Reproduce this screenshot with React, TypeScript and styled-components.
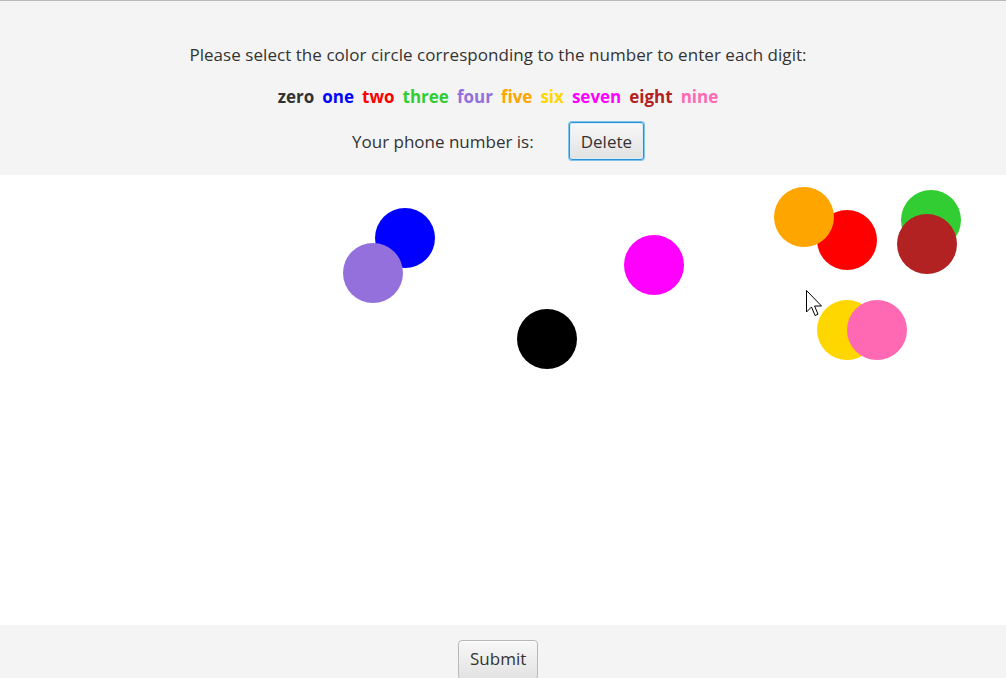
import React from "react";
import styled, { createGlobalStyle } from "styled-components";

const Global = createGlobalStyle`
  html, body { margin: 0; padding: 0; background: #ffffff; }
  body { font-family: "Open Sans", "Noto Sans", sans-serif; }
`;

const Page = styled.div`
  width: 1006px;
  height: 678px;
  display: flex;
  flex-direction: column;
  overflow: hidden;
`;

const Header = styled.header`
  border-top: 1px solid #b9b9b9;
  background: #f4f4f4;
  display: flex;
  flex-direction: column;
  align-items: center;
  padding: 44px 10px 0 0;
  box-sizing: content-box;
  height: 130px;
`;

const Instruction = styled.div`
  font-size: 17px;
  line-height: 20px;
  color: #333333;
  letter-spacing: 0.05px;
`;

const Words = styled.div`
  margin-top: 22px;
  display: flex;
  gap: 8px;
  font-size: 17px;
  line-height: 20px;
  font-weight: 700;
`;

const Word = styled.span<{ $c: string }>`
  color: ${(p) => p.$c};
`;

const PhoneRow = styled.div`
  margin-top: 15px;
  display: flex;
  align-items: center;
  gap: 35px;
`;

const PhoneLabel = styled.span`
  font-size: 17px;
  color: #333333;
`;

const Button = styled.button<{ $focused?: boolean }>`
  font-family: inherit;
  font-size: 17px;
  color: #333333;
  height: 38px;
  padding: 0 11px;
  border-radius: 3px;
  cursor: pointer;
  background: linear-gradient(#f8f8f8, #e2e2e2);
  border: 1px solid ${(p) => (p.$focused ? "#2a93d5" : "#b8b8b8")};
  box-shadow: ${(p) =>
    p.$focused ? "0 0 0 1px #7fc3ea, inset 0 0 0 1px #dcecf7" : "inset 0 1px 0 #ffffff"};
`;

const Canvas = styled.main`
  flex: 1;
  position: relative;
  background: #ffffff;
`;

const Dot = styled.div<{ $c: string }>`
  position: absolute;
  width: 60px;
  height: 60px;
  border-radius: 50%;
  background: ${(p) => p.$c};
`;

const Cursor = styled.svg`
  position: absolute;
  left: 806px;
  top: 115px;
`;

const Footer = styled.footer`
  height: 53px;
  background: #f4f4f4;
  display: flex;
  justify-content: center;
  padding: 15px 10px 0 0;
  box-sizing: border-box;
`;

const SubmitButton = styled(Button)`
  width: 80px;
  height: 40px;
  padding-bottom: 3px;
  border-radius: 4px;
`;

const words: [string, string][] = [
  ["zero", "#333333"],
  ["one", "#0000ff"],
  ["two", "#ff0000"],
  ["three", "#32cd32"],
  ["four", "#9370db"],
  ["five", "#ffa500"],
  ["six", "#ffd700"],
  ["seven", "#ff00ff"],
  ["eight", "#b22222"],
  ["nine", "#ff69b4"],
];

const dots: { c: string; x: number; y: number }[] = [
  { c: "#0000ff", x: 405, y: 238 },
  { c: "#9370db", x: 373, y: 273 },
  { c: "#000000", x: 547, y: 339 },
  { c: "#ff00ff", x: 654, y: 265 },
  { c: "#ff0000", x: 847, y: 240 },
  { c: "#ffa500", x: 804, y: 217 },
  { c: "#32cd32", x: 931, y: 220 },
  { c: "#b22222", x: 927, y: 244 },
  { c: "#ffd700", x: 847, y: 330 },
  { c: "#ff69b4", x: 877, y: 330 },
];

export default function App() {
  return (
    <Page>
      <Global />
      <Header>
        <Instruction>
          Please select the color circle corresponding to the number to enter each digit:
        </Instruction>
        <Words>
          {words.map(([w, c]) => (
            <Word key={w} $c={c}>
              {w}
            </Word>
          ))}
        </Words>
        <PhoneRow>
          <PhoneLabel>Your phone number is:</PhoneLabel>
          <Button $focused>Delete</Button>
        </PhoneRow>
      </Header>
      <Canvas>
        {dots.map((d, i) => (
          <Dot
            key={i}
            $c={d.c}
            style={{ left: d.x - 30, top: d.y - 30 - 175 }}
          />
        ))}
        <Cursor width="20" height="30" viewBox="0 0 20 30">
          <path
            d="M0.5 0.5 L0.5 22 L5.5 17 L9 25.5 L12 24.2 L8.6 16 L15.5 16 Z"
            fill="#ffffff"
            stroke="#000000"
            strokeWidth="1"
            strokeLinejoin="miter"
          />
        </Cursor>
      </Canvas>
      <Footer>
        <SubmitButton>Submit</SubmitButton>
      </Footer>
    </Page>
  );
}
